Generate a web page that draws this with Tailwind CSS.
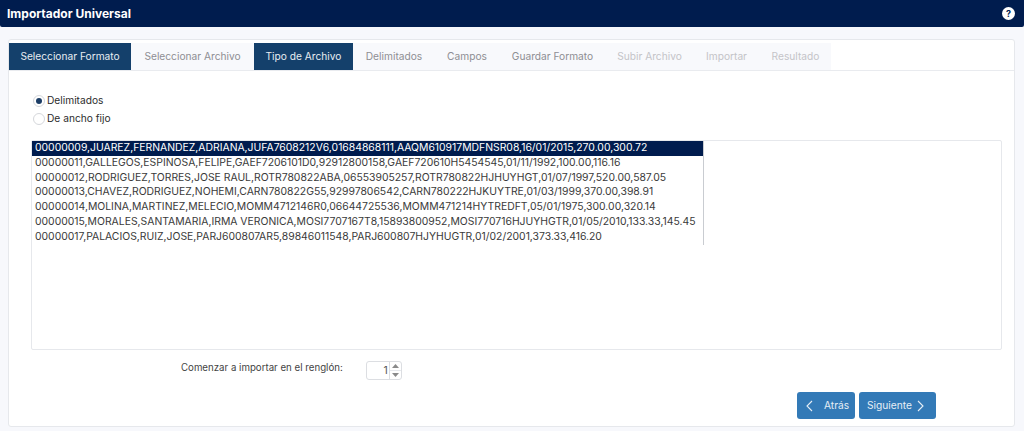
<!DOCTYPE html>
<html lang="es">
<head>
    <meta charset="UTF-8">
    <title>Importador Universal</title>
    <script src="https://cdn.jsdelivr.net/npm/@tailwindcss/browser@4"></script>
</head>
<body class="h-[431px] overflow-hidden bg-[#f7f8fc] font-['Inter',sans-serif] text-[10.2px] text-[#333]">
    <!-- Header -->
    <header class="h-[27px] bg-[#001c4e] rounded-b-[2px] flex items-center justify-between pl-[7px] pr-[9px]">
        <h1 class="text-[12px] font-bold text-white">Importador Universal</h1>
        <span class="w-[13px] h-[13px] rounded-full bg-white text-[#001c4e] text-[9px] font-bold flex items-center justify-center">?</span>
    </header>

    <!-- Card -->
    <main class="mt-[12px] ml-[8px] w-[1007px] h-[388px] bg-white border border-[#e6e8ec] rounded-[3px] flex flex-col">
        <nav class="mt-[3px] h-[28px] flex border-b border-[#e9ebef] text-[10.2px]">
            <a class="w-[122px] flex items-center justify-center bg-[#14406b] text-[#e8edf2]">Seleccionar Formato</a>
            <a class="w-[123px] flex items-center justify-center bg-[#f8f9fc] text-[#8e8e93]">Seleccionar Archivo</a>
            <a class="w-[99px] flex items-center justify-center bg-[#14406b] text-[#e8edf2]">Tipo de Archivo</a>
            <a class="w-[82px] flex items-center justify-center bg-[#f8f9fc] text-[#8e8e93]">Delimitados</a>
            <a class="w-[64px] flex items-center justify-center bg-[#f8f9fc] text-[#8e8e93]">Campos</a>
            <a class="w-[107px] flex items-center justify-center bg-[#f8f9fc] text-[#8e8e93]">Guardar Formato</a>
            <a class="w-[87px] flex items-center justify-center bg-[#f8f9fc] text-[#c4c4c8]">Subir Archivo</a>
            <a class="w-[67px] flex items-center justify-center bg-[#f8f9fc] text-[#c4c4c8]">Importar</a>
            <a class="w-[71px] flex items-center justify-center bg-[#f8f9fc] text-[#c4c4c8]">Resultado</a>
        </nav>

        <!-- Radios -->
        <div class="mt-[23px] ml-[24px] flex flex-col gap-[4px]">
            <label class="h-[14px] flex items-center gap-[2px] text-[#2c2c2c]">
                <span class="w-[12px] h-[12px] rounded-full border border-[#d5d7db] flex items-center justify-center"><span class="w-[6px] h-[6px] rounded-full bg-[#1c3d66]"></span></span>
                Delimitados
            </label>
            <label class="h-[14px] flex items-center gap-[2px] text-[#2c2c2c]">
                <span class="w-[12px] h-[12px] rounded-full border border-[#d5d7db]"></span>
                De ancho fijo
            </label>
        </div>

        <!-- File preview -->
        <div class="mt-[14px] ml-[22px] w-[971px] h-[210px] border border-[#e6e8ec] rounded-[2px]">
            <ul class="w-[672px] border-r border-[#c9ccd1] text-[10.4px] leading-[14.8px] text-[#3a3a3a] whitespace-nowrap">
                <li class="bg-[#001c4e] text-white px-[3px]">00000009,JUAREZ,FERNANDEZ,ADRIANA,JUFA7608212V6,01684868111,AAQM610917MDFNSR08,16/01/2015,270.00,300.72</li>
                <li class="px-[3px]">00000011,GALLEGOS,ESPINOSA,FELIPE,GAEF7206101D0,92912800158,GAEF720610H5454545,01/11/1992,100.00,116.16</li>
                <li class="px-[3px]">00000012,RODRIGUEZ,TORRES,JOSE RAUL,ROTR780822ABA,06553905257,ROTR780822HJHUYHGT,01/07/1997,520.00,587.05</li>
                <li class="px-[3px]">00000013,CHAVEZ,RODRIGUEZ,NOHEMI,CARN780822G55,92997806542,CARN780222HJKUYTRE,01/03/1999,370.00,398.91</li>
                <li class="px-[3px]">00000014,MOLINA,MARTINEZ,MELECIO,MOMM4712146R0,06644725536,MOMM471214HYTREDFT,05/01/1975,300.00,320.14</li>
                <li class="px-[3px]">00000015,MORALES,SANTAMARIA,IRMA VERONICA,MOSI7707167T8,15893800952,MOSI770716HJUYHGTR,01/05/2010,133.33,145.45</li>
                <li class="px-[3px]">00000017,PALACIOS,RUIZ,JOSE,PARJ600807AR5,89846011548,PARJ600807HJYHUGTR,01/02/2001,373.33,416.20</li>
            </ul>
        </div>

        <!-- Start row -->
        <div class="mt-[11px] ml-[172px] flex items-start gap-[23px]">
            <span class="text-[9.7px] leading-[14px] text-[#444]">Comenzar a importar en el renglón:</span>
            <div class="w-[36px] h-[19px] border border-[#dcdee2] rounded-[3px] flex">
                <span class="flex-1 text-right pr-[1px] text-[10.4px] leading-[17px] text-[#555]">1</span>
                <div class="w-[12px] border-l border-[#dcdee2] flex flex-col">
                    <span class="flex-1 flex items-center justify-center border-b border-[#e6e8ec]">
                        <svg width="7" height="4" viewBox="0 0 7 4"><path d="M3.5 0L7 4H0z" fill="#8a8a8a"/></svg>
                    </span>
                    <span class="flex-1 flex items-center justify-center">
                        <svg width="7" height="4" viewBox="0 0 7 4"><path d="M0 0h7L3.5 4z" fill="#8a8a8a"/></svg>
                    </span>
                </div>
            </div>
        </div>

        <!-- Buttons -->
        <div class="mt-[12px] ml-[788px] flex gap-[4px] text-[10.2px] text-[#e6eef6]">
            <button class="w-[58px] h-[27px] bg-[#337ab7] rounded-[3px] flex items-center pl-[9px] gap-[11px]">
                <svg width="7" height="12" viewBox="0 0 7 12" fill="none" stroke="#e6eef6" stroke-width="1.1"><path d="M6 1L1 6l5 5"/></svg>
                Atrás
            </button>
            <button class="w-[77px] h-[27px] bg-[#337ab7] rounded-[3px] flex items-center pl-[8px] gap-[5px]">
                Siguiente
                <svg width="7" height="12" viewBox="0 0 7 12" fill="none" stroke="#e6eef6" stroke-width="1.1"><path d="M1 1l5 5-5 5"/></svg>
            </button>
        </div>
    </main>
</body>
</html>
